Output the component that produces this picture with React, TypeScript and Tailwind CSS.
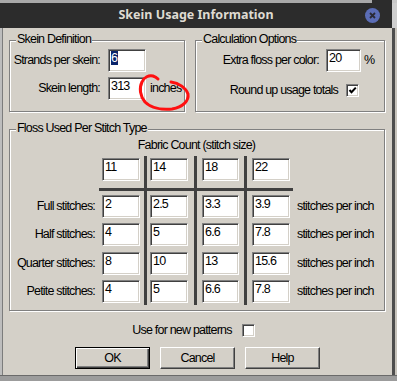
import React from "react";

const FONT = "font-['Liberation_Sans',Arial,sans-serif] text-[12.5px] tracking-[-0.8px]";

function Field({ v, w = "w-[38px]", sel = false }: { v: string; w?: string; sel?: boolean }) {
  return (
    <div
      className={`${w} h-[23px] bg-white border border-t-[#808080] border-l-[#808080] border-b-white border-r-white shadow-[inset_1px_1px_0_#404040,inset_-1px_-1px_0_#d4d0c8] pl-[2px] pt-[1px] text-black leading-[15px] whitespace-nowrap`}
    >
      {sel ? <span className="bg-[#0a246a] text-white pr-[1px]">{v}</span> : v}
    </div>
  );
}

function Check({ on }: { on: boolean }) {
  return (
    <div className="w-[13px] h-[13px] bg-white border border-t-[#808080] border-l-[#808080] border-b-white border-r-white shadow-[inset_1px_1px_0_#404040,inset_-1px_-1px_0_#d4d0c8] flex items-center justify-center">
      {on && (
        <svg width="9" height="9" viewBox="0 0 9 9">
          <path d="M1.5 4 L3.5 6.3 L7.8 1.6" stroke="#000" strokeWidth="2" fill="none" />
        </svg>
      )}
    </div>
  );
}

function Group({ title, className, children }: { title: string; className: string; children?: React.ReactNode }) {
  return (
    <div className={`relative border border-[#808080] shadow-[1px_1px_0_#fff,inset_1px_1px_0_#fff] ${className}`}>
      <span className="absolute top-[-9px] left-[6px] px-[1px] bg-[#d4d0c8] leading-[15px] whitespace-nowrap">{title}</span>
      {children}
    </div>
  );
}

function Btn({ label, def = false }: { label: string; def?: boolean }) {
  return def ? (
    <div className="w-[75px] h-[22px] border border-black shadow-[inset_1px_1px_0_#fff,inset_-1px_-1px_0_#404040,inset_-2px_-2px_0_#808080] flex items-center justify-center leading-[15px]">
      {label}
    </div>
  ) : (
    <div className="w-[75px] h-[22px] border border-t-white border-l-white border-b-[#404040] border-r-[#404040] shadow-[inset_-1px_-1px_0_#808080] flex items-center justify-center leading-[15px]">
      {label}
    </div>
  );
}

const cols = ["col-start-3", "col-start-5", "col-start-7", "col-start-9"];
const rowsC = ["row-start-3", "row-start-5", "row-start-7", "row-start-9"];
const header = ["11", "14", "18", "22"];
const data: { label: string; vals: string[] }[] = [
  { label: "Full stitches:", vals: ["2", "2.5", "3.3", "3.9"] },
  { label: "Half stitches:", vals: ["4", "5", "6.6", "7.8"] },
  { label: "Quarter stitches:", vals: ["8", "10", "13", "15.6"] },
  { label: "Petite stitches:", vals: ["4", "5", "6.6", "7.8"] },
];

export default function App() {
  return (
    <div className={`relative w-[397px] h-[381px] overflow-hidden bg-[#b8b8b8] flex flex-col text-black ${FONT}`}>
      {/* top strip */}
      <div className="h-[3px] flex">
        <div className="w-[372px] bg-[#a9a9a9]" />
        <div className="w-[20px] bg-[#2c2c2c]" />
        <div className="flex-1 bg-[#c9c9c9]" />
      </div>
      <div className="flex">
        <div className="w-[392px] flex flex-col">
          {/* title bar */}
          <div className="relative h-[25px] bg-[#2c2c2c] flex items-center justify-center">
            <span className="font-['Noto_Sans',sans-serif] font-bold text-[12.5px] tracking-normal text-[#dfdbd2] leading-none">
              Skein Usage Information
            </span>
            <div className="absolute right-[12px] top-[5px] w-[15px] h-[15px] rounded-full bg-[#5b6db6] flex items-center justify-center">
              <svg width="7" height="7" viewBox="0 0 7 7">
                <path d="M1 1 L6 6 M6 1 L1 6" stroke="#2a2a35" strokeWidth="1.8" />
              </svg>
            </div>
          </div>
          {/* body */}
          <div className="flex h-[347px]">
            <div className="w-[3px] bg-[#bdbdbd] border-r border-r-[#7c7c7c]" />
            <div className="w-[389px] bg-[#d4d0c8] px-[6px] pt-[12px] flex flex-col">
              <div className="flex gap-[10px]">
                <Group title="Skein Definition" className="w-[176px] h-[72px]">
                  <div className="pt-[8px] flex flex-col gap-[5px]">
                    <div className="flex items-center">
                      <div className="w-[90px] text-right leading-[15px] whitespace-nowrap">Strands per skein:</div>
                      <div className="ml-[8px]">
                        <Field v="6" sel />
                      </div>
                    </div>
                    <div className="flex items-center">
                      <div className="w-[90px] text-right leading-[15px] whitespace-nowrap">Skein length:</div>
                      <div className="ml-[8px]">
                        <Field v="313" />
                      </div>
                      <div className="ml-[4px] leading-[15px]">inches</div>
                    </div>
                  </div>
                </Group>
                <Group title="Calculation Options" className="w-[190px] h-[72px]">
                  <div className="pt-[8px] flex flex-col">
                    <div className="flex items-center">
                      <div className="w-[123px] text-right leading-[15px] whitespace-nowrap">Extra floss per color:</div>
                      <div className="ml-[7px]">
                        <Field v="20" w="w-[35px]" />
                      </div>
                      <div className="ml-[3px] leading-[15px]">%</div>
                    </div>
                    <div className="flex items-center h-[23px] mt-[7px]">
                      <div className="w-[142px] text-right leading-[15px] whitespace-nowrap">Round up usage totals</div>
                      <div className="ml-[8px]">
                        <Check on />
                      </div>
                    </div>
                  </div>
                </Group>
              </div>

              <Group title="Floss Used Per Stitch Type" className="w-[376px] h-[182px] mt-[17px]">
                <div className="pt-[8px]">
                  <div className="w-[281px] pl-[92px] text-center leading-[15px] whitespace-nowrap">Fabric Count (stitch size)</div>
                  <div className="mt-[5px] grid grid-cols-[85px_7px_38px_10px_38px_14px_37px_13px_38px_7px_auto] grid-rows-[23px_14px_23px_5px_23px_6px_23px_5px_23px]">
                    {/* lines */}
                    <div className="col-start-4 row-[1/10] -my-[2px] w-[3px] justify-self-center ml-[1px] bg-[#404040]" />
                    <div className="col-start-6 row-[1/10] -my-[2px] w-[3px] justify-self-center bg-[#404040]" />
                    <div className="col-start-8 row-[1/10] -my-[2px] w-[3px] justify-self-center bg-[#404040]" />
                    <div className="col-[2/11] row-start-2 h-[3px] mx-[4px] mt-[7px] bg-[#404040]" />
                    {header.map((h, i) => (
                      <div key={h} className={`${cols[i]} row-start-1`}>
                        <Field v={h} w="w-full" />
                      </div>
                    ))}
                    {data.map((r, ri) => (
                      <React.Fragment key={r.label}>
                        <div className={`col-start-1 ${rowsC[ri]} self-center text-right leading-[15px] whitespace-nowrap`}>
                          {r.label}
                        </div>
                        {r.vals.map((v, ci) => (
                          <div key={ci} className={`${cols[ci]} ${rowsC[ri]}`}>
                            <Field v={v} w="w-full" />
                          </div>
                        ))}
                        <div className={`col-start-11 ${rowsC[ri]} self-center leading-[15px] whitespace-nowrap`}>
                          stitches per inch
                        </div>
                      </React.Fragment>
                    ))}
                  </div>
                </div>
              </Group>

              <div className="mt-[13px] h-[13px] flex items-center justify-center pr-[8px]">
                <span className="leading-[15px]">Use for new patterns</span>
                <div className="ml-[10px]">
                  <Check on={false} />
                </div>
              </div>

              <div className="mt-[10px] flex justify-center gap-[10px]">
                <Btn label="OK" def />
                <Btn label="Cancel" />
                <Btn label="Help" />
              </div>
            </div>
          </div>
        </div>
        {/* right strip */}
        <div className="flex-1 flex flex-col">
          <div className="h-[25px] bg-[#cfcfcf]" />
          <div className="flex-1 flex">
            <div className="w-[3px] bg-[#4e4e4e]" />
            <div className="flex-1 bg-[#c8c4bc]" />
          </div>
        </div>
      </div>
      {/* bottom strip */}
      <div className="flex-1 bg-[#9c9c9c] border-t border-t-[#6a6a6a]" />

      {/* red hand-drawn circle */}
      <svg className="absolute left-0 top-0 pointer-events-none" width="397" height="381" viewBox="0 0 397 381">
        <path
          d="M171 82 C179 83 186 88 188 94 C189 101 183 107 172 109 C162 110 151 108 145 102 C140 96 139 88 142 82 C144 77 149 75 153 76 C156 77 157 78 158 79"
          stroke="#ff1010"
          strokeWidth="3"
          fill="none"
          strokeLinecap="round"
        />
      </svg>
    </div>
  );
}
